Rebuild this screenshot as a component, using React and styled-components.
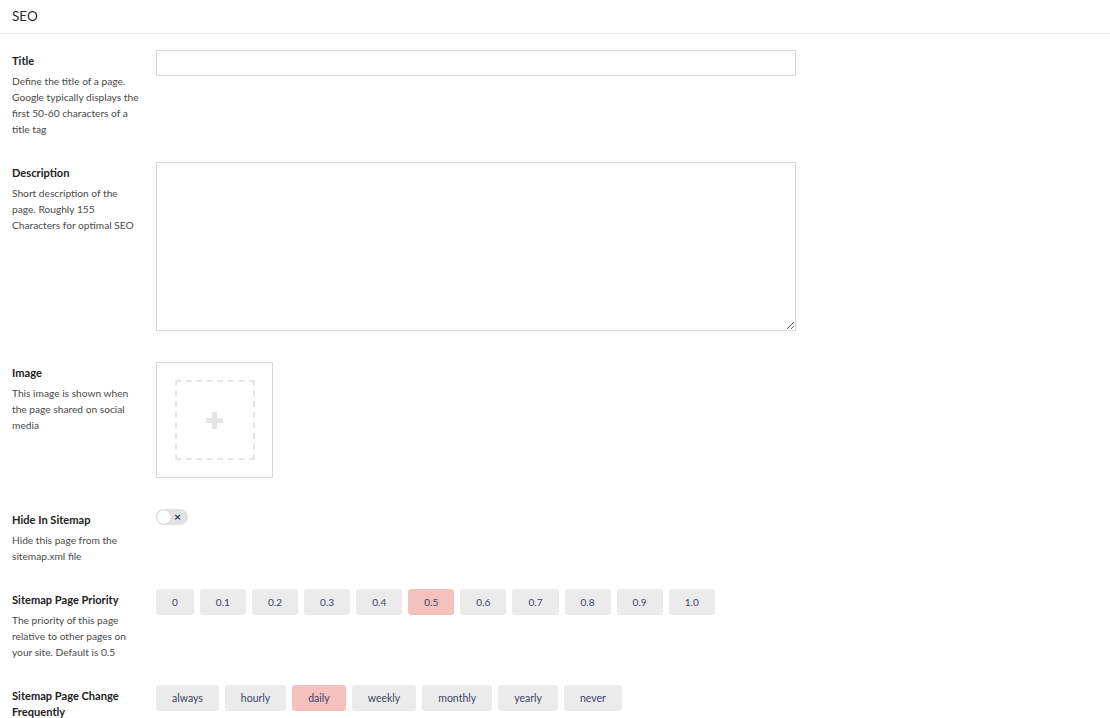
import React from 'react';
import styled, { createGlobalStyle } from 'styled-components';

const GlobalStyle = createGlobalStyle`
  body {
    margin : 0;
    background : #ffffff;
    font-family : Lato, 'Open Sans', sans-serif;
    color : #333333;
  }
`;

const priorities = ['0', '0.1', '0.2', '0.3', '0.4', '0.5', '0.6', '0.7', '0.8', '0.9', '1.0'];
const frequencies = ['always', 'hourly', 'daily', 'weekly', 'monthly', 'yearly', 'never'];

function Field({ title, text, children }) {
  return (
    <Row>
      <Label>
        <LabelTitle>{title}</LabelTitle>
        <LabelText>{text}</LabelText>
      </Label>
      <Control>{children}</Control>
    </Row>
  );
}

function App() {
  return (
    <>
      <GlobalStyle />
      <Header>SEO</Header>
      <Form>
        <Field title="Title" text="Define the title of a page. Google typically displays the first 50-60 characters of a title tag">
          <Input type="text" />
        </Field>
        <Field title="Description" text="Short description of the page. Roughly 155 Characters for optimal SEO">
          <TextArea />
        </Field>
        <Field title="Image" text="This image is shown when the page shared on social media">
          <ImageBox>
            <DropZone>
              <Plus />
            </DropZone>
          </ImageBox>
        </Field>
        <Field title="Hide In Sitemap" text="Hide this page from the sitemap.xml file">
          <Toggle>
            <Knob />
            <Cross>×</Cross>
          </Toggle>
        </Field>
        <Field title="Sitemap Page Priority" text="The priority of this page relative to other pages on your site. Default is 0.5">
          <Choices>
            {priorities.map((p) => (
              <Choice key={p} size={10.1} active={p === '0.5'}>{p}</Choice>
            ))}
          </Choices>
        </Field>
        <Field title="Sitemap Page Change Frequently" text="">
          <Choices>
            {frequencies.map((f) => (
              <Choice key={f} size={10.5} active={f === 'daily'}>{f}</Choice>
            ))}
          </Choices>
        </Field>
      </Form>
    </>
  );
}

const Header = styled.div`
  height : 34px;
  box-sizing : border-box;
  padding : 8px 12px 0;
  font-size : 13.5px;
  line-height : 16px;
  color : #2b2b2b;
  border-bottom : 1px solid #e8e8e8;
`;
const Form = styled.div`
  padding : 16px 12px 0;
`;
const Row = styled.div`
  display : flex;
  flex-direction : row;
  align-items : flex-start;
  padding-bottom : 25px;
`;
const Label = styled.div`
  width : 144px;
  flex-shrink : 0;
  box-sizing : border-box;
  padding : 3px 13px 0 0;
`;
const LabelTitle = styled.div`
  font-size : 11.1px;
  font-weight : 700;
  line-height : 16px;
  color : #222222;
  margin-bottom : 4px;
`;
const LabelText = styled.div`
  font-size : 10.2px;
  line-height : 16px;
  color : #4a4a4a;
`;
const Control = styled.div`
  padding-bottom : 6px;
`;
const Input = styled.input`
  display : block;
  width : 640px;
  height : 26px;
  box-sizing : border-box;
  border : 1px solid #d6d6d6;
  border-radius : 0;
  outline : none;
`;
const TextArea = styled.textarea`
  display : block;
  width : 640px;
  height : 169px;
  box-sizing : border-box;
  border : 1px solid #d6d6d6;
  border-radius : 0;
  outline : none;
  resize : vertical;
`;
const ImageBox = styled.div`
  width : 117px;
  height : 116px;
  box-sizing : border-box;
  border : 1px solid #d6d6d6;
  display : flex;
  align-items : center;
  justify-content : center;
`;
const DropZone = styled.div`
  width : 80px;
  height : 80px;
  box-sizing : border-box;
  border : 2px dashed #e6e6e6;
  display : flex;
  align-items : center;
  justify-content : center;
`;
const Plus = styled.div`
  position : relative;
  width : 17px;
  height : 17px;
  &::before, &::after {
    content : '';
    position : absolute;
    background : #e4e4e4;
  }
  &::before {
    left : 6px;
    top : 0;
    width : 5px;
    height : 17px;
  }
  &::after {
    top : 6px;
    left : 0;
    width : 17px;
    height : 5px;
  }
`;
const Toggle = styled.div`
  position : relative;
  width : 32px;
  height : 16px;
  border-radius : 8px;
  background : #e2e2e2;
`;
const Knob = styled.div`
  position : absolute;
  left : 1px;
  top : 1px;
  width : 14px;
  height : 14px;
  border-radius : 50%;
  background : #ffffff;
  box-shadow : 0 0 1px rgba(0, 0, 0, 0.3);
`;
const Cross = styled.span`
  position : absolute;
  left : 18px;
  top : 0;
  font-size : 12px;
  line-height : 15px;
  font-weight : 700;
  color : #2f3553;
`;
const Choices = styled.div`
  display : flex;
  flex-direction : row;
  gap : 6px;
`;
const Choice = styled.div`
  height : 26px;
  padding : 0 16px;
  border-radius : 3px;
  display : flex;
  align-items : center;
  justify-content : center;
  font-size : ${(p) => p.size}px;
  color : #3d4465;
  background : ${(p) => (p.active ? '#f4c1bd' : '#ebebeb')};
  cursor : pointer;
`;

export default App;
